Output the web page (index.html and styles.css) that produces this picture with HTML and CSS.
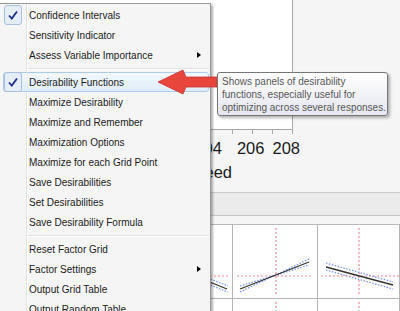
FILE: index.html
```html
<!DOCTYPE html>
<html>
  <head>
    <title>Prediction Profiler</title>
    <link rel="stylesheet" href="styles.css">
  </head>
  <body>
    <div class="report">
      <div class="profile">
        <div class="plot-col">
          <div class="plot-frame"></div>
          <div class="ticks"><span></span><span></span><span></span><span></span></div>
          <div class="axis-labels">
            <span class="lbl-204">204</span>
            <span class="lbl-206">206</span>
            <span>208</span>
          </div>
          <div class="axis-title">Speed</div>
        </div>
      </div>
      <div class="band"></div>
      <div class="strip"></div>
      <div class="cells">
        <div class="cell">
          <svg width="232" height="74">
            <line class="ref-line" x1="170" y1="51" x2="228" y2="51" />
            <line class="band-line" x1="180" y1="42" x2="228" y2="61" />
            <line class="band-line" x1="180" y1="48" x2="228" y2="67" />
            <line class="fit-line" x1="180" y1="45" x2="227" y2="64" />
          </svg>
        </div>
        <div class="cell">
          <svg width="84" height="74">
            <line class="ref-line" x1="43" y1="3" x2="43" y2="70" />
            <line class="ref-line" x1="4" y1="51" x2="80" y2="51" />
            <line class="band-line" x1="7" y1="67" x2="76" y2="34" />
            <line class="band-line" x1="7" y1="61" x2="76" y2="40" />
            <line class="fit-line" x1="7" y1="64" x2="76" y2="37" />
          </svg>
        </div>
        <div class="cell">
          <svg width="90" height="74">
            <line class="ref-line" x1="41" y1="3" x2="41" y2="70" />
            <line class="ref-line" x1="3" y1="51" x2="90" y2="51" />
            <line class="band-line" x1="8" y1="38" x2="75" y2="57" />
            <line class="band-line" x1="8" y1="45" x2="75" y2="64" />
            <line class="fit-line" x1="8" y1="42" x2="75" y2="60" />
          </svg>
        </div>
        <div class="cell"></div>
        <div class="cell">
          <svg width="84" height="20">
            <line class="ref-line" x1="43" y1="3" x2="43" y2="20" />
          </svg>
        </div>
        <div class="cell">
          <svg width="90" height="20">
            <line class="ref-line" x1="41" y1="3" x2="41" y2="20" />
          </svg>
        </div>
      </div>
    </div>

    <div class="menu">
      <div class="menu-item"><span class="mark check"><svg width="12" height="12" viewBox="0 0 12 12"><path d="M2 6.5 L4.8 9.5 L10 2.5" /></svg></span><span>Confidence Intervals</span></div>
      <div class="menu-item"><span class="mark"></span><span>Sensitivity Indicator</span></div>
      <div class="menu-item"><span class="mark"></span><span>Assess Variable Importance</span><span class="sub-arrow"></span></div>
      <div class="menu-sep"></div>
      <div class="menu-item hot"><span class="mark check"><svg width="12" height="12" viewBox="0 0 12 12"><path d="M2 6.5 L4.8 9.5 L10 2.5" /></svg></span><span>Desirability Functions</span></div>
      <div class="menu-item"><span class="mark"></span><span>Maximize Desirability</span></div>
      <div class="menu-item"><span class="mark"></span><span>Maximize and Remember</span></div>
      <div class="menu-item"><span class="mark"></span><span>Maximization Options</span></div>
      <div class="menu-item"><span class="mark"></span><span>Maximize for each Grid Point</span></div>
      <div class="menu-item"><span class="mark"></span><span>Save Desirabilities</span></div>
      <div class="menu-item"><span class="mark"></span><span>Set Desirabilities</span></div>
      <div class="menu-item"><span class="mark"></span><span>Save Desirability Formula</span></div>
      <div class="menu-sep"></div>
      <div class="menu-item"><span class="mark"></span><span>Reset Factor Grid</span></div>
      <div class="menu-item"><span class="mark"></span><span>Factor Settings</span><span class="sub-arrow"></span></div>
      <div class="menu-item"><span class="mark"></span><span>Output Grid Table</span></div>
      <div class="menu-item"><span class="mark"></span><span>Output Random Table</span></div>
    </div>

    <svg class="callout" width="62" height="32" viewBox="0 0 62 32">
      <path d="M2 16 L27 4 L30 11 L61 11 L61 21 L30 21 L27 28 Z" />
    </svg>

    <div class="tooltip">Shows panels of desirability<br>functions, especially useful for<br>optimizing across several responses.</div>
  </body>
</html>
```

FILE: styles.css
```css
* {
  box-sizing: border-box;
}

body {
  margin: 0;
  width: 400px;
  height: 311px;
  overflow: hidden;
  position: relative;
  background: #f5f5f5;
  font-family: "Liberation Sans", Arial, sans-serif;
}

/* Report behind the menu */
.profile {
  height: 192px;
}

.plot-col {
  width: 300px;
}

.plot-frame {
  width: 293px;
  height: 130px;
  background: #fff;
  border-right: 1px solid #a8a8a8;
  border-bottom: 1px solid #a8a8a8;
}

.ticks {
  width: 293px;
  height: 4px;
  display: flex;
  justify-content: flex-end;
  gap: 19px;
}

.ticks span {
  width: 1px;
  background: #a8a8a8;
}

.axis-labels {
  display: flex;
  justify-content: flex-end;
  margin-top: 4px;
  font-size: 16.5px;
  line-height: 20px;
  color: #1a1a1a;
}

.lbl-204 {
  margin-right: 15px;
}

.lbl-206 {
  margin-right: 8px;
}

.axis-title {
  margin-top: 4px;
  padding-right: 68px;
  text-align: right;
  font-size: 16.5px;
  line-height: 20px;
  color: #1a1a1a;
}

.band {
  height: 24px;
  background: #ebebeb;
  border-top: 1px solid #cdcdcd;
  border-bottom: 1px solid #c6c6c6;
}

.strip {
  height: 8px;
}

.cells {
  display: grid;
  grid-template-columns: 233px 85px 1fr;
  grid-template-rows: 74px 40px;
  border-top: 1px solid #b9b9b9;
  background: #fff;
}

.cell {
  border-right: 1px solid #b5b5b5;
  border-bottom: 1px solid #b5b5b5;
  overflow: hidden;
}

.cell svg {
  display: block;
}

.ref-line {
  stroke: #f28b96;
  stroke-width: 1.2;
  stroke-dasharray: 2 2;
}

.band-line {
  stroke: #6f8ff0;
  stroke-width: 1.2;
  stroke-dasharray: 1.5 1.5;
}

.fit-line {
  stroke: #333;
  stroke-width: 1.3;
}

/* Context menu */
.menu {
  position: absolute;
  left: 0;
  top: 3px;
  width: 211px;
  height: 330px;
  padding: 1px 1px 0 3px;
  border: 1px solid #979797;
  border-left: none;
  background:
    linear-gradient(to right, transparent 26px, #e2e3e3 26px, #e2e3e3 27px, #fff 27px, #fff 28px, transparent 28px),
    #f5f5f5;
  box-shadow: 2px 2px 2px rgba(0, 0, 0, 0.3);
  font-size: 10px;
  color: #1b1b1b;
}

.menu-item {
  display: flex;
  align-items: center;
  height: 20px;
  border: 1px solid transparent;
  border-radius: 3px;
  white-space: nowrap;
}

.menu-item.hot {
  border-color: #aacbec;
  background: linear-gradient(#f3f8fd, #e0edf9);
}

.mark {
  width: 18px;
  height: 20px;
  margin: -1px 7px -1px 0;
  flex: 0 0 auto;
}

.check {
  display: flex;
  align-items: center;
  justify-content: center;
  background: #e4edf8;
  border: 1px solid #aabfda;
  border-radius: 3px;
}

.check path {
  fill: none;
  stroke: #1d2e8e;
  stroke-width: 1.8;
}

.sub-arrow {
  margin-left: auto;
  margin-right: 7px;
  width: 0;
  height: 0;
  border-left: 4px solid #000;
  border-top: 3.5px solid transparent;
  border-bottom: 3.5px solid transparent;
}

.menu-sep {
  height: 2px;
  margin: 3px 0 2px 25px;
  border-top: 1px solid #e0e0e0;
  border-bottom: 1px solid #fff;
}

/* Callout */
.callout {
  position: absolute;
  left: 156px;
  top: 66px;
}

.callout path {
  fill: #e8453c;
  stroke: #c9352d;
  stroke-width: 0.8;
}

.tooltip {
  position: absolute;
  left: 217px;
  top: 72px;
  width: 171px;
  height: 44px;
  padding: 2px 0 0 4px;
  border: 1px solid #767676;
  border-radius: 3px;
  background: linear-gradient(#ffffff, #e5e6f0);
  box-shadow: 2px 2px 3px rgba(0, 0, 0, 0.3);
  font-size: 10px;
  line-height: 13px;
  color: #575757;
  white-space: nowrap;
}
```
